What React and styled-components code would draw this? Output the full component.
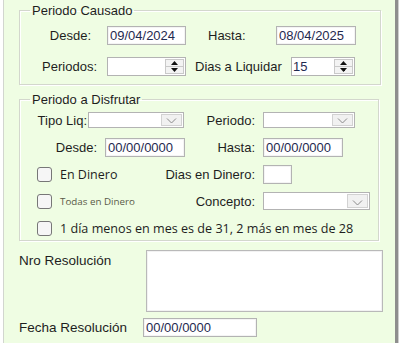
import React from "react";
import styled, { createGlobalStyle } from "styled-components";

const Global = createGlobalStyle`
  html, body { margin: 0; padding: 0; background: #ffffff; }
  body { font-family: "Liberation Sans", Arial, sans-serif; }
  * { box-sizing: border-box; }
`;

const Frame = styled.div`
  margin-left: 3px;
  width: 395px;
  height: 343px;
  background: #effde3;
  border-left: 1px solid #d2d6cf;
  border-right: 3px solid #8e8e8e;
  box-shadow: 1px 0 0 #cfcfcf;
  padding: 3px 0 0 15px;
`;

const Group = styled.fieldset`
  margin: 0 0 ${(p) => p.$mb || 0}px 0;
  width: ${(p) => p.$w}px;
  border: 1px solid #d3d7cd;
  box-shadow: inset 1px 1px 0 #ffffff, 1px 1px 0 #ffffff;
  padding: ${(p) => p.$pt}px 0 ${(p) => p.$pb}px 0;
  min-width: 0;
  display: grid;
  row-gap: ${(p) => p.$gap}px;
`;

const Legend = styled.legend`
  font-size: 13px;
  line-height: 15px;
  color: #1e1e1e;
  margin-left: 10px;
  padding: 0 2px;
`;

const Row = styled.div`
  display: grid;
  grid-template-columns: ${(p) => p.$cols};
  height: ${(p) => p.$h}px;
  align-items: center;
`;

const Split = styled.div`
  display: flex;
  align-items: center;
  justify-content: space-between;
  height: 100%;
`;

const Cell = styled.div`
  display: flex;
  align-items: center;
  height: 100%;
`;

const Label = styled.span`
  display: block;
  font-size: ${(p) => p.$size || 13}px;
  line-height: 15px;
  color: #1e1e1e;
  white-space: nowrap;
  width: ${(p) => (p.$w ? `${p.$w}px` : "auto")};
  text-align: ${(p) => p.$align || "left"};
  padding-left: ${(p) => p.$pl || 0}px;
  padding-right: ${(p) => p.$pr || 0}px;
  padding-top: ${(p) => p.$pt || 0}px;
  flex: none;
`;

const Field = styled.input`
  width: ${(p) => p.$w}px;
  height: ${(p) => p.$h || 19}px;
  border: 1px solid #b3b3b3;
  box-shadow: inset 0 0 0 1px #f4f4f4;
  background: #ffffff;
  font-family: "Liberation Sans", Arial, sans-serif;
  font-size: 13px;
  color: #1f2a4f;
  padding: 0 0 0 2px;
  margin: 0;
  outline: none;
  flex: none;
`;

const BoxWrap = styled.div`
  width: ${(p) => p.$w}px;
  height: ${(p) => p.$h}px;
  border: 1px solid #b3b3b3;
  background: #ffffff;
  display: flex;
  flex: none;
`;

const BoxText = styled.span`
  flex: 1;
  font-size: 13px;
  line-height: ${(p) => p.$h - 2}px;
  color: #1f2a4f;
  padding-left: 1px;
`;

const SpinButtons = styled.div`
  width: 19px;
  margin: 1px;
  border: 1px solid #c9c9c9;
  background: #f3f3f3;
  display: flex;
  flex-direction: column;
`;

const SpinHalf = styled.div`
  flex: 1;
  display: flex;
  align-items: center;
  justify-content: center;
  border-top: ${(p) => (p.$bottom ? "1px solid #c9c9c9" : "none")};
`;

const DropButton = styled.div`
  width: 21px;
  margin: 1px;
  border: 1px solid #d2d2d2;
  background: #f1f1f1;
  display: flex;
  align-items: flex-end;
  justify-content: center;
  padding-bottom: 1px;
`;

const Check = styled.span`
  display: block;
  width: 15px;
  height: 15px;
  border: 1.5px solid #777777;
  border-radius: 3px;
  background: #f6f6f6;
  flex: none;
`;

const CheckRow = styled.div`
  display: flex;
  align-items: center;
  gap: 8px;
  padding-left: 17px;
  height: 100%;
`;

const CheckText = styled.span`
  font-family: "Open Sans", "Noto Sans", sans-serif;
  font-size: ${(p) => p.$size}px;
  color: ${(p) => p.$color || "#1e1e1e"};
  white-space: nowrap;
`;

const Bottom = styled.div`
  display: grid;
  row-gap: 6px;
  margin-top: 9px;
`;

const BottomRow = styled.div`
  display: grid;
  grid-template-columns: ${(p) => p.$cols};
  align-items: ${(p) => p.$align || "center"};
`;

const Area = styled.div`
  width: 237px;
  height: 62px;
  border: 1px solid #b9b9b9;
  box-shadow: inset 0 0 0 1px #f2f2f2;
  background: #ffffff;
`;

const Spin = ({ w, value }) => (
  <BoxWrap $w={w} $h={19}>
    <BoxText $h={19}>{value}</BoxText>
    <SpinButtons>
      <SpinHalf>
        <svg width="7" height="4" viewBox="0 0 7 4">
          <path d="M0 4 L3.5 0 L7 4 Z" fill="#111" />
        </svg>
      </SpinHalf>
      <SpinHalf $bottom>
        <svg width="7" height="4" viewBox="0 0 7 4">
          <path d="M0 0 L3.5 4 L7 0 Z" fill="#111" />
        </svg>
      </SpinHalf>
    </SpinButtons>
  </BoxWrap>
);

const Combo = ({ w, h }) => (
  <BoxWrap $w={w} $h={h}>
    <BoxText $h={h} />
    <DropButton>
      <svg width="11" height="6" viewBox="0 0 11 6">
        <path d="M1 0.5 L5.5 5 L10 0.5" fill="none" stroke="#8a8a8a" strokeWidth="1" />
      </svg>
    </DropButton>
  </BoxWrap>
);

export default function App() {
  return (
    <>
      <Global />
      <Frame>
        <Group $w={362} $pt={8} $pb={8} $gap={12} $mb={7}>
          <Legend>Periodo Causado</Legend>
          <Row $cols="87px 79px 90px 80px" $h={19}>
            <Label $align="right" $pr={16}>Desde:</Label>
            <Field $w={79} defaultValue="09/04/2024" readOnly />
            <Label $pl={22}>Hasta:</Label>
            <Field $w={80} defaultValue="08/04/2025" readOnly />
          </Row>
          <Row $cols="87px 79px 105px 64px" $h={19}>
            <Label $align="right" $pr={10}>Periodos:</Label>
            <Spin w={79} value="" />
            <Label $pl={9}>Dias a Liquidar</Label>
            <Spin w={64} value="15" />
          </Row>
        </Group>

        <Group $w={360} $pt={3} $pb={2} $gap={7}>
          <Legend>Periodo a Disfrutar</Legend>
          <Row $cols="243px auto" $h={20}>
            <Split>
              <Cell>
                <Label $w={68} $align="right" $pr={1}>Tipo Liq:</Label>
                <Combo w={96} h={16} />
              </Cell>
              <Label $pr={8}>Periodo:</Label>
            </Split>
            <Cell>
              <Combo w={92} h={16} />
            </Cell>
          </Row>
          <Row $cols="243px auto" $h={20}>
            <Split>
              <Cell>
                <Label $w={85} $align="right" $pr={8}>Desde:</Label>
                <Field $w={80} defaultValue="00/00/0000" readOnly />
              </Cell>
              <Label $pr={8}>Hasta:</Label>
            </Split>
            <Cell>
              <Field $w={80} defaultValue="00/00/0000" readOnly />
            </Cell>
          </Row>
          <Row $cols="243px auto" $h={20}>
            <Split>
              <CheckRow>
                <Check />
                <CheckText $size={12.5}>En Dinero</CheckText>
              </CheckRow>
              <Label $pr={8}>Dias en Dinero:</Label>
            </Split>
            <Cell>
              <Field $w={29} defaultValue="" readOnly />
            </Cell>
          </Row>
          <Row $cols="243px auto" $h={20}>
            <Split>
              <CheckRow>
                <Check />
                <CheckText $size={9.8} $color="#5a5a48">Todas en Dinero</CheckText>
              </CheckRow>
              <Label $pr={8}>Concepto:</Label>
            </Split>
            <Cell>
              <Combo w={107} h={18} />
            </Cell>
          </Row>
          <Row $cols="auto" $h={20}>
            <CheckRow>
              <Check />
              <CheckText $size={12.6}>1 día menos en mes es de 31, 2 más en mes de 28</CheckText>
            </CheckRow>
          </Row>
        </Group>

        <Bottom>
          <BottomRow $cols="127px 237px" $align="start">
            <Label $size={13.5} $pt={3}>Nro Resolución</Label>
            <Area />
          </BottomRow>
          <BottomRow $cols="124px 114px">
            <Label $size={13.5}>Fecha Resolución</Label>
            <Field $w={114} defaultValue="00/00/0000" readOnly />
          </BottomRow>
        </Bottom>
      </Frame>
    </>
  );
}
